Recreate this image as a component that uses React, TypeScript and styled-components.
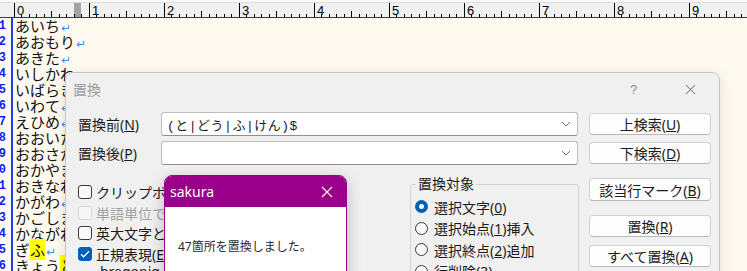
import styled, { createGlobalStyle } from "styled-components";

/* ── Global ──────────────────────────────────────────── */

const GlobalStyle = createGlobalStyle`
  html, body { margin: 0; padding: 0; background: #fffaef; }
  body { font-family: "Noto Sans CJK JP", "Noto Sans", sans-serif; }
`;

const Screen = styled.div`
  position: relative;
  width: 747px;
  height: 271px;
  overflow: hidden;
  background: #fffaef;
`;

/* ── Ruler ───────────────────────────────────────────── */

const RulerBar = styled.div`
  height: 18px;
  background: #f0f0f0;
  svg { display: block; }
`;

function Ruler() {
  const marks = [];
  for (let c = 0; c <= 98; c++) {
    const x = 14 + Math.floor(c * 7.5) + 0.5;
    const top = c % 10 === 0 ? 3 : c % 5 === 0 ? 11 : 14;
    marks.push(<line key={"t" + c} x1={x} x2={x} y1={top} y2={17} stroke="#000" />);
    if (c % 10 === 0) {
      marks.push(
        <text key={"n" + c} x={x + 2.5} y={15} fontSize="13" fontFamily="Liberation Sans, sans-serif" fill="#000">
          {c / 10}
        </text>
      );
    }
  }
  return (
    <RulerBar>
      <svg width="747" height="18" shapeRendering="crispEdges">
        <rect x="0" y="0" width="747" height="3" fill="#f8f8f8" />
        <line x1="0" x2="747" y1="2.5" y2="2.5" stroke="#dedede" />
        <rect x="74" y="3" width="7" height="14" fill="#a3a3a3" />
        {marks}
        <line x1="0" x2="747" y1="17.5" y2="17.5" stroke="#3c3c3c" />
      </svg>
    </RulerBar>
  );
}

/* ── Editor ──────────────────────────────────────────── */

const EditorBody = styled.div`
  display: flex;
`;

const Gutter = styled.div`
  width: 11px;
  flex-shrink: 0;
  border-right: 2px solid #2040f0;
`;

const LineNo = styled.div`
  height: 16px;
  display: flex;
  justify-content: flex-end;
  overflow: hidden;
  padding-right: 5px;
  font: bold 12px/16px "Liberation Mono", monospace;
  color: #0a1eff;
`;

const TextColumn = styled.div`
  padding-left: 2px;
`;

const Line = styled.div`
  height: 16px;
  white-space: nowrap;
  font: 15px/16px "Noto Sans CJK JP", sans-serif;
  color: #111;
`;

const Match = styled.span`
  background: #ffff00;
`;

const Eol = styled.span`
  display: inline-block;
  width: 8px;
  margin-left: 1px;
  font: 12px/16px "DejaVu Sans", sans-serif;
  color: #3a8ee6;
`;

const LINES: { text: string; match?: string }[] = [
  { text: "あいち" },
  { text: "あおもり" },
  { text: "あきた" },
  { text: "いしかわ" },
  { text: "いばらき" },
  { text: "いわて" },
  { text: "えひめ" },
  { text: "おおいた" },
  { text: "おおさか" },
  { text: "おかやま" },
  { text: "おきなわ" },
  { text: "かがわ" },
  { text: "かごしま" },
  { text: "かながわ" },
  { text: "ぎ", match: "ふ" },
  { text: "きょう", match: "と" },
];

/* ── Replace dialog ──────────────────────────────────── */

const Dialog = styled.div`
  position: absolute;
  left: 65px;
  top: 72px;
  width: 655px;
  height: 240px;
  box-sizing: border-box;
  background: #f0f0f0;
  border: 1px solid #c6c6c6;
  border-radius: 8px;
  box-shadow: 0 4px 14px rgba(0, 0, 0, 0.12);
  font-family: "Noto Sans", "Noto Sans CJK JP", sans-serif;
  font-size: 14px;
  color: #1b1b1b;
`;

const TitleBar = styled.div`
  height: 32px;
  display: flex;
  align-items: center;
  padding-left: 7px;
`;

const TitleText = styled.span`
  flex: 1;
  color: #9c9c9c;
  font-size: 14px;
`;

const TitleButton = styled.div`
  width: 57px;
  height: 32px;
  display: flex;
  align-items: center;
  justify-content: center;
  color: #8e8e8e;
  font: 13px "Liberation Sans", sans-serif;
`;

const DialogBody = styled.div`
  padding: 7px 8px 0 12px;
`;

const FormGrid = styled.div`
  display: grid;
  grid-template-columns: 72px 417px 122px;
  column-gap: 11px;
  row-gap: 5px;
  align-items: center;
`;

const FieldLabel = styled.span`
  white-space: nowrap;
`;

const Combo = styled.div`
  height: 24px;
  box-sizing: border-box;
  background: #fff;
  border: 1px solid #bdbdbd;
  border-bottom-color: #8f8f8f;
  border-radius: 3px;
  display: flex;
  align-items: center;
  padding: 0 6px 0 5px;
`;

const ComboText = styled.span`
  flex: 1;
  font: 13px "Liberation Mono", "Noto Sans CJK JP", monospace;
  letter-spacing: 0.5px;
  white-space: nowrap;
`;

const Button = styled.div<{ $h?: number }>`
  height: ${(p) => p.$h ?? 22}px;
  box-sizing: border-box;
  background: #fdfdfd;
  border: 1px solid #d2d2d2;
  border-bottom-color: #b8b8b8;
  border-radius: 4px;
  display: flex;
  align-items: center;
  justify-content: center;
  white-space: nowrap;
`;

const LowerGrid = styled.div`
  display: grid;
  grid-template-columns: 322px 169px 122px;
  column-gap: 10px;
  margin-top: 12px;
  align-items: start;
`;

const CheckList = styled.div`
  padding-top: 5px;
`;

const CheckRow = styled.div<{ $disabled?: boolean }>`
  height: 20.5px;
  display: flex;
  align-items: center;
  gap: 4px;
  white-space: nowrap;
  color: ${(p) => (p.$disabled ? "#a3a3a3" : "#1b1b1b")};
`;

const OptionLabel = styled.span`
  white-space: nowrap;
`;

const Box = styled.span<{ $checked?: boolean; $disabled?: boolean }>`
  width: 14px;
  height: 14px;
  box-sizing: border-box;
  flex-shrink: 0;
  border-radius: 3px;
  border: 1px solid ${(p) => (p.$checked ? "#005fb8" : p.$disabled ? "#d6d6d6" : "#3a3a3a")};
  background: ${(p) => (p.$checked ? "#005fb8" : p.$disabled ? "#f6f6f6" : "#f9f9f9")};
  display: flex;
  align-items: center;
  justify-content: center;
`;

const Note = styled.div`
  padding-left: 22px;
  margin-top: 1px;
  line-height: 13px;
  white-space: nowrap;
`;

const Group = styled.fieldset`
  margin: 0;
  padding: 5px 0 0 4px;
  border: 1px solid #d3d3d3;
  border-radius: 3px;
  min-width: 0;
  height: 120px;
`;

const GroupLegend = styled.legend`
  margin-left: 1px;
  padding: 0 2px;
  line-height: 14px;
`;

const RadioRow = styled.div`
  height: 21.5px;
  display: flex;
  align-items: center;
  gap: 6px;
  white-space: nowrap;
`;

const Radio = styled.span<{ $checked?: boolean }>`
  width: 13px;
  height: 13px;
  box-sizing: border-box;
  flex-shrink: 0;
  border-radius: 50%;
  border: ${(p) => (p.$checked ? "4px solid #005fb8" : "1px solid #3a3a3a")};
  background: ${(p) => (p.$checked ? "#fff" : "#f9f9f9")};
`;

const ButtonColumn = styled.div`
  padding-top: 1px;
  display: flex;
  flex-direction: column;
`;

/* ── Message box ─────────────────────────────────────── */

const MsgBox = styled.div`
  position: absolute;
  left: 164px;
  top: 175px;
  width: 183px;
  height: 130px;
  box-sizing: border-box;
  background: #fff;
  border: 1px solid #9a0089;
  border-radius: 8px 8px 0 0;
  overflow: hidden;
  box-shadow: 0 4px 16px rgba(0, 0, 0, 0.22);
`;

const MsgTitle = styled.div`
  height: 31px;
  background: #9a0089;
  color: #fff;
  display: flex;
  align-items: center;
  justify-content: space-between;
  padding: 0 13px 0 5px;
  font: 14px "Noto Sans", sans-serif;
`;

const MsgText = styled.div`
  padding: 33px 0 0 13px;
  font: 12px/14px "Noto Sans", "Noto Sans CJK JP", sans-serif;
  color: #2a2a2a;
  white-space: nowrap;
`;

/* ── Bits ────────────────────────────────────────────── */

const Chevron = () => (
  <svg width="10" height="6" viewBox="0 0 10 6">
    <path d="M1 1l4 4 4-4" fill="none" stroke="#707070" strokeWidth="1" />
  </svg>
);

const Cross = ({ color, size }: { color: string; size: number }) => (
  <svg width={size} height={size} viewBox="0 0 12 12">
    <path d="M1 1l10 10M11 1L1 11" stroke={color} strokeWidth="1.1" />
  </svg>
);

const Tick = () => (
  <svg width="10" height="8" viewBox="0 0 10 8">
    <path d="M1 4.2l2.6 2.6L9 1.3" fill="none" stroke="#fff" strokeWidth="1.3" />
  </svg>
);

/* ── Page ────────────────────────────────────────────── */

export default function App() {
  return (
    <Screen>
      <GlobalStyle />
      <Ruler />
      <EditorBody>
        <Gutter>
          {LINES.map((_, i) => (
            <LineNo key={i}><span>{i + 1}</span></LineNo>
          ))}
        </Gutter>
        <TextColumn>
          {LINES.map((l, i) => (
            <Line key={i}>
              {l.text}
              {l.match && <Match>{l.match}</Match>}
              <Eol>↵</Eol>
            </Line>
          ))}
        </TextColumn>
      </EditorBody>

      <Dialog>
        <TitleBar>
          <TitleText>置換</TitleText>
          <TitleButton>?</TitleButton>
          <TitleButton><Cross color="#8e8e8e" size={11} /></TitleButton>
        </TitleBar>
        <DialogBody>
          <FormGrid>
            <FieldLabel>置換前(<u>N</u>)</FieldLabel>
            <Combo>
              <ComboText>(と|どう|ふ|けん)$</ComboText>
              <Chevron />
            </Combo>
            <Button><span>上検索(<u>U</u>)</span></Button>
            <FieldLabel>置換後(<u>P</u>)</FieldLabel>
            <Combo>
              <ComboText />
              <Chevron />
            </Combo>
            <Button><span>下検索(<u>D</u>)</span></Button>
          </FormGrid>

          <LowerGrid>
            <CheckList>
              <CheckRow><Box /><OptionLabel>クリップボードから貼り付ける(<u>T</u>)</OptionLabel></CheckRow>
              <CheckRow $disabled><Box $disabled /><OptionLabel>単語単位で探す(<u>W</u>)</OptionLabel></CheckRow>
              <CheckRow><Box /><OptionLabel>英大文字と小文字を区別する(<u>C</u>)</OptionLabel></CheckRow>
              <CheckRow><Box $checked><Tick /></Box><OptionLabel>正規表現(<u>E</u>)</OptionLabel></CheckRow>
              <Note>bregonig.dll Ver.4.20 (Onigmo 6.2.0)</Note>
            </CheckList>

            <Group>
              <GroupLegend>置換対象</GroupLegend>
              <RadioRow><Radio $checked /><OptionLabel>選択文字(<u>0</u>)</OptionLabel></RadioRow>
              <RadioRow><Radio /><OptionLabel>選択始点(<u>1</u>)挿入</OptionLabel></RadioRow>
              <RadioRow><Radio /><OptionLabel>選択終点(<u>2</u>)追加</OptionLabel></RadioRow>
              <RadioRow><Radio /><OptionLabel>行削除(<u>3</u>)</OptionLabel></RadioRow>
            </Group>

            <ButtonColumn>
              <Button $h={23}><span>該当行マーク(<u>B</u>)</span></Button>
              <Button style={{ marginTop: 14 }}><span>置換(<u>R</u>)</span></Button>
              <Button style={{ marginTop: 8 }}><span>すべて置換(<u>A</u>)</span></Button>
            </ButtonColumn>
          </LowerGrid>
        </DialogBody>
      </Dialog>

      <MsgBox>
        <MsgTitle>
          <span>sakura</span>
          <Cross color="#fff" size={12} />
        </MsgTitle>
        <MsgText>47箇所を置換しました。</MsgText>
      </MsgBox>
    </Screen>
  );
}
